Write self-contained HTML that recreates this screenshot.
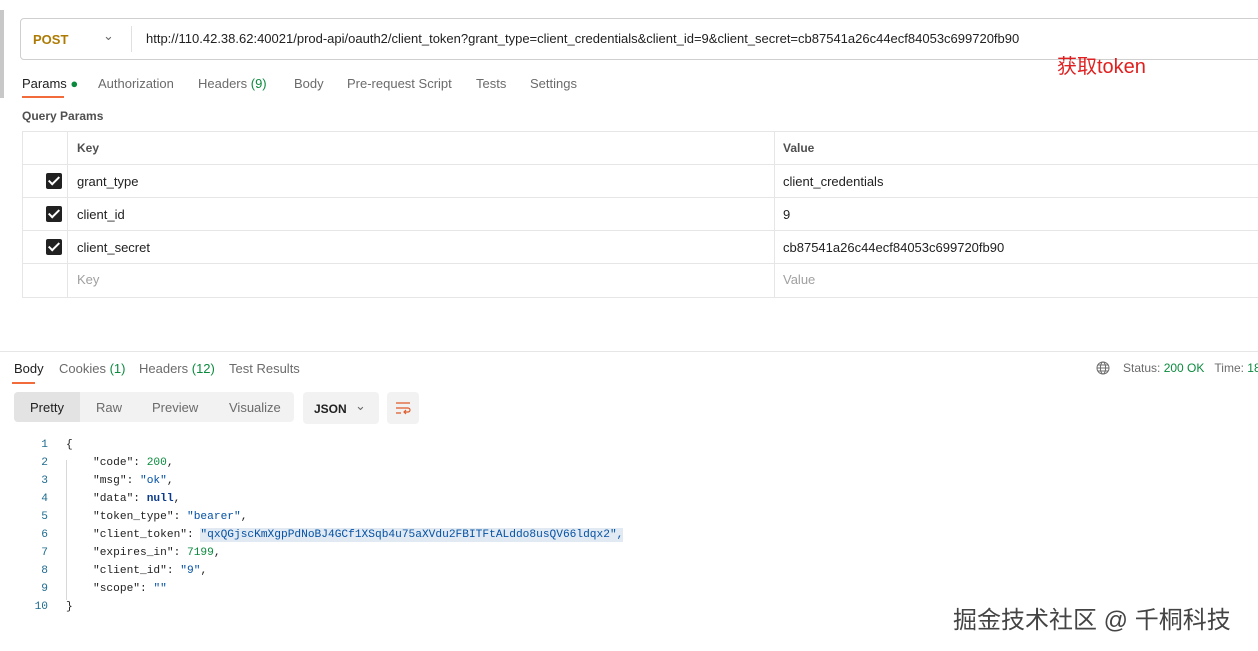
<!DOCTYPE html><html><head><meta charset="utf-8"><style>
body{margin:0;width:1258px;height:651px;background:#fff;font-family:"Liberation Sans",sans-serif;font-size:13px;color:#212121;position:relative;overflow:hidden}
.a{position:absolute;white-space:nowrap}
.g{color:#0b8a3e}
.m{color:#6b6b6b}
.code{font-family:"Liberation Mono",monospace;font-size:11.2px}
.cb{position:absolute;left:46px;width:16px;height:16px;background:#212121;border-radius:2px}
.cb:after{content:"";position:absolute;left:5px;top:1px;width:4px;height:9px;border:solid #fff;border-width:0 2px 2px 0;transform:rotate(45deg)}
.hl{position:absolute;left:22px;right:0;height:1px;background:#e6e6e6}
.s{color:#0451a5}
</style></head><body>
<div class="a" style="left:0;top:10px;width:4px;height:88px;background:#c8c8c8"></div>
<div class="a" style="left:20px;top:18px;width:1250px;height:40px;border:1px solid #cfcfcf;border-radius:4px"></div>
<div class="a" style="left:33px;top:32px;font-weight:bold;color:#ad7a03">POST</div>
<div class="a" style="left:103px;top:28px;color:#6b6b6b">&#8964;</div>
<div class="a" style="left:131px;top:26px;width:1px;height:26px;background:#e0e0e0"></div>
<div class="a" style="left:146px;top:31px">http://110.42.38.62:40021/prod-api/oauth2/client_token?grant_type=client_credentials&amp;client_id=9&amp;client_secret=cb87541a26c44ecf84053c699720fb90</div>
<div class="a" style="left:1057px;top:50px;color:#e02020;font-size:20px;font-family:'Liberation Sans','Noto Sans CJK SC',sans-serif">获取token</div>
<div class="a" style="left:22px;top:76px">Params <span class="g">●</span></div>
<div class="a" style="left:22px;top:96px;width:42px;height:2px;background:#f26b3a"></div>
<div class="a m" style="left:98px;top:76px">Authorization</div>
<div class="a m" style="left:198px;top:76px">Headers <span class="g">(9)</span></div>
<div class="a m" style="left:294px;top:76px">Body</div>
<div class="a m" style="left:347px;top:76px">Pre-request Script</div>
<div class="a m" style="left:476px;top:76px">Tests</div>
<div class="a m" style="left:530px;top:76px">Settings</div>
<div class="a" style="left:22px;top:109px;font-weight:bold;color:#505050;font-size:12px">Query Params</div>
<div class="a" style="left:22px;top:131px;width:1240px;height:165px;border:1px solid #e6e6e6"></div>
<div class="hl" style="top:164px"></div><div class="hl" style="top:197px"></div><div class="hl" style="top:230px"></div><div class="hl" style="top:263px"></div>
<div class="a" style="left:67px;top:131px;width:1px;height:166px;background:#e6e6e6"></div>
<div class="a" style="left:774px;top:131px;width:1px;height:166px;background:#e6e6e6"></div>
<div class="a" style="left:77px;top:141px;font-weight:bold;color:#505050;font-size:12px">Key</div>
<div class="a" style="left:783px;top:141px;font-weight:bold;color:#505050;font-size:12px">Value</div>
<div class="cb" style="top:173px"></div><div class="cb" style="top:206px"></div><div class="cb" style="top:239px"></div>
<div class="a" style="left:77px;top:174px">grant_type</div><div class="a" style="left:783px;top:174px">client_credentials</div>
<div class="a" style="left:77px;top:207px">client_id</div><div class="a" style="left:783px;top:207px">9</div>
<div class="a" style="left:77px;top:240px">client_secret</div><div class="a" style="left:783px;top:240px">cb87541a26c44ecf84053c699720fb90</div>
<div class="a" style="left:77px;top:272px;color:#a0a0a0">Key</div><div class="a" style="left:783px;top:272px;color:#a0a0a0">Value</div>
<div class="a" style="left:0;top:351px;width:1258px;height:1px;background:#e6e6e6"></div>
<div class="a" style="left:14px;top:361px">Body</div>
<div class="a" style="left:12px;top:382px;width:23px;height:2px;background:#f26b3a"></div>
<div class="a m" style="left:59px;top:361px">Cookies <span class="g">(1)</span></div>
<div class="a m" style="left:139px;top:361px">Headers <span class="g">(12)</span></div>
<div class="a m" style="left:229px;top:361px">Test Results</div>
<svg class="a" style="left:1096px;top:361px" width="14" height="14" viewBox="0 0 14 14" fill="none" stroke="#6b6b6b"><circle cx="7" cy="7" r="6"/><ellipse cx="7" cy="7" rx="2.6" ry="6"/><path d="M1 7h12M2 4h10M2 10h10"/></svg>
<div class="a m" style="left:1123px;top:361px;font-size:12px">Status: <span class="g">200 OK</span> &nbsp;&nbsp;Time: <span class="g">18</span></div>
<div class="a" style="left:14px;top:392px;width:280px;height:30px;background:#f2f2f2;border-radius:4px"></div>
<div class="a" style="left:14px;top:392px;width:66px;height:30px;background:#e3e3e3;border-radius:4px 0 0 4px"></div>
<div class="a" style="left:30px;top:400px">Pretty</div>
<div class="a m" style="left:96px;top:400px">Raw</div>
<div class="a m" style="left:152px;top:400px">Preview</div>
<div class="a m" style="left:229px;top:400px">Visualize</div>
<div class="a" style="left:303px;top:392px;width:76px;height:32px;background:#f2f2f2;border-radius:4px"></div>
<div class="a" style="left:314px;top:402px;font-weight:bold;font-size:12px">JSON</div>
<div class="a m" style="left:355px;top:398px">&#8964;</div>
<div class="a" style="left:387px;top:392px;width:32px;height:32px;background:#f2f2f2;border-radius:4px"></div>
<svg class="a" style="left:395px;top:400px" width="16" height="16" viewBox="0 0 16 16" fill="none" stroke="#e05a2b" stroke-width="1.2"><path d="M1 3h14M1 8h12a2 2 0 010 4H9M11 10l-2 2 2 2M1 13h5"/></svg>
<div class="a" style="left:66px;top:460px;width:1px;height:140px;background:#d8d8d8"></div>
<div class="a code" style="left:0;top:436px;line-height:18px;width:48px;text-align:right;color:#1d6b8f">1<br>2<br>3<br>4<br>5<br>6<br>7<br>8<br>9<br>10</div>
<div class="a code" style="left:66px;top:436px;line-height:18px;color:#212121">{</div>
<div class="a code" style="left:93px;top:454px;line-height:18px;color:#212121">"code": <span class="g">200</span>,<br>
"msg": <span class="s">"ok"</span>,<br>
"data": <b style="color:#0b3a8a">null</b>,<br>
"token_type": <span class="s">"bearer"</span>,<br>
"client_token": <span class="s" style="background:#e1eaf3;padding:1px 0">"qxQGjscKmXgpPdNoBJ4GCf1XSqb4u75aXVdu2FBITFtALddo8usQV66ldqx2",</span><br>
"expires_in": <span class="g">7199</span>,<br>
"client_id": <span class="s">"9"</span>,<br>
"scope": <span class="s">""</span></div>
<div class="a code" style="left:66px;top:598px;line-height:18px;color:#212121">}</div>
<div class="a" style="left:953px;top:600px;font-size:24px;color:#444;font-family:'Liberation Sans','Noto Sans CJK SC',sans-serif;text-shadow:0 0 2px #fff">掘金技术社区 @ 千桐科技</div>
</body></html>
